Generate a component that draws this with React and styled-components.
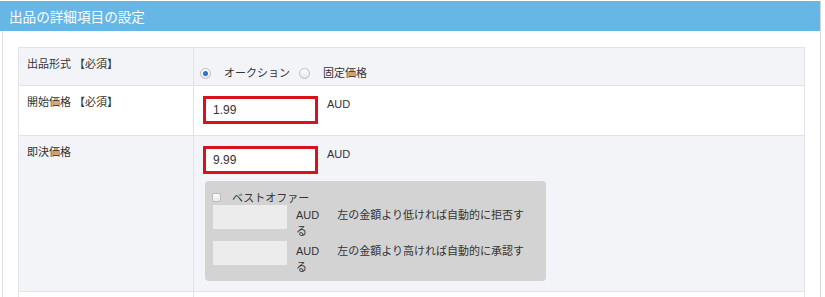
import React from 'react';
import styled, { createGlobalStyle } from 'styled-components';

const GlobalStyle = createGlobalStyle`
  html, body {
    margin: 0;
    padding: 0;
    width: 825px;
    height: 297px;
    overflow: hidden;
    background: #fff;
  }
  body {
    font-family: 'Liberation Sans', 'Noto Sans CJK JP', sans-serif;
    color: #333;
  }
`;

const Panel = styled.section`
  width: 821px;
  margin-top: 1px;
  border-right: 1px solid #d6d8dc;
  box-sizing: border-box;
`;

const PanelHeader = styled.h2`
  margin: 0;
  height: 30px;
  padding-left: 9px;
  display: flex;
  align-items: center;
  background: #66b7e5;
  color: #fff;
  font-size: 13.6px;
  font-weight: normal;
`;

const PanelBody = styled.div`
  margin-left: 2px;
  border-left: 1px solid #dfe0e4;
  padding: 16px 15px 0 15px;
`;

const Table = styled.div`
  border: 1px solid #e2e3e8;
  border-bottom: none;
`;

const Row = styled.div`
  display: grid;
  grid-template-columns: 175px 1fr;
  background: ${(p) => (p.$alt ? '#f3f4f8' : '#fff')};
  border-top: ${(p) => (p.$first ? 'none' : '1px solid #e2e3e8')};
`;

const Label = styled.div`
  border-right: 1px solid #e2e3e8;
  padding: 9px 8px 8px;
  font-size: 11px;
  line-height: 14px;
  color: #333;
`;

const Value = styled.div`
  padding: ${(p) => p.$pt ?? 10}px 10px ${(p) => p.$pb ?? 10}px 9px;
  min-height: ${(p) => p.$h || 0}px;
  font-size: 11px;
  color: #333;
`;

const RadioGroup = styled.div`
  display: flex;
  align-items: center;
  height: 16px;
`;

const Radio = styled.span`
  width: 11px;
  height: 11px;
  border-radius: 50%;
  box-sizing: border-box;
  border: 1px solid #b9bcc2;
  background: linear-gradient(#ffffff, #e4e6ea);
  display: inline-flex;
  align-items: center;
  justify-content: center;
  margin-left: ${(p) => p.$ml || 0}px;
  margin-right: 13px;
  margin-top: 2px;

  &::after {
    content: '';
    width: 5px;
    height: 5px;
    border-radius: 50%;
    background: ${(p) => (p.$checked ? '#2f6fd6' : 'transparent')};
  }
`;

const PriceLine = styled.div`
  display: flex;
  align-items: flex-start;
`;

const PriceInput = styled.div`
  width: 115px;
  height: 28px;
  box-sizing: border-box;
  border: 3px solid #d7121d;
  background: #fff;
  padding-left: 7px;
  display: flex;
  align-items: center;
  font-size: 12px;
  color: #333;
`;

const Unit = styled.span`
  margin-left: 9px;
  padding-top: 1px;
  font-size: 11px;
  line-height: 14px;
`;

const OfferBox = styled.div`
  margin-top: 7px;
  margin-left: 2px;
  width: 341px;
  height: 100px;
  box-sizing: border-box;
  background: #d3d3d3;
  border-radius: 4px;
  padding: 8px 8px 0 7px;
`;

const OfferTitle = styled.div`
  display: flex;
  align-items: center;
  height: 16px;
  font-size: 11px;
`;

const Check = styled.span`
  width: 9px;
  height: 9px;
  box-sizing: border-box;
  border: 1px solid #bdbdbd;
  border-radius: 2px;
  background: linear-gradient(#fafafa, #e9e9e9);
  margin-right: 11px;
`;

const OfferRow = styled.div`
  display: flex;
  align-items: flex-start;
  margin-top: ${(p) => p.$mt || 0}px;
  margin-left: 1px;
`;

const OfferInput = styled.div`
  width: 74px;
  height: 24px;
  background: #ececec;
  flex-shrink: 0;
`;

const OfferNote = styled.div`
  width: 232px;
  margin-left: 9px;
  margin-top: 2px;
  font-size: 11px;
  line-height: 16px;
`;

const NoteText = styled.span`
  margin-left: 18px;
`;

export default function App() {
  return (
    <>
      <GlobalStyle />
      <Panel>
        <PanelHeader>出品の詳細項目の設定</PanelHeader>
        <PanelBody>
          <Table>
            <Row $first $alt>
              <Label>出品形式 【必須】</Label>
              <Value $pt={16} $pb={5}>
                <RadioGroup>
                  <Radio $checked $ml={-3} />
                  <span>オークション</span>
                  <Radio $ml={9} />
                  <span>固定価格</span>
                </RadioGroup>
              </Value>
            </Row>
            <Row>
              <Label>開始価格 【必須】</Label>
              <Value $pb={11}>
                <PriceLine>
                  <PriceInput>1.99</PriceInput>
                  <Unit>AUD</Unit>
                </PriceLine>
              </Value>
            </Row>
            <Row $alt>
              <Label>即決価格</Label>
              <Value $pb={10}>
                <PriceLine>
                  <PriceInput>9.99</PriceInput>
                  <Unit>AUD</Unit>
                </PriceLine>
                <OfferBox>
                  <OfferTitle>
                    <Check />
                    <span>ベストオファー</span>
                  </OfferTitle>
                  <OfferRow>
                    <OfferInput />
                    <OfferNote>
                      AUD<NoteText>左の金額より低ければ自動的に拒否する</NoteText>
                    </OfferNote>
                  </OfferRow>
                  <OfferRow $mt={2}>
                    <OfferInput />
                    <OfferNote>
                      AUD<NoteText>左の金額より高ければ自動的に承認する</NoteText>
                    </OfferNote>
                  </OfferRow>
                </OfferBox>
              </Value>
            </Row>
            <Row>
              <Label />
              <Value $h={40} />
            </Row>
          </Table>
        </PanelBody>
      </Panel>
    </>
  );
}
